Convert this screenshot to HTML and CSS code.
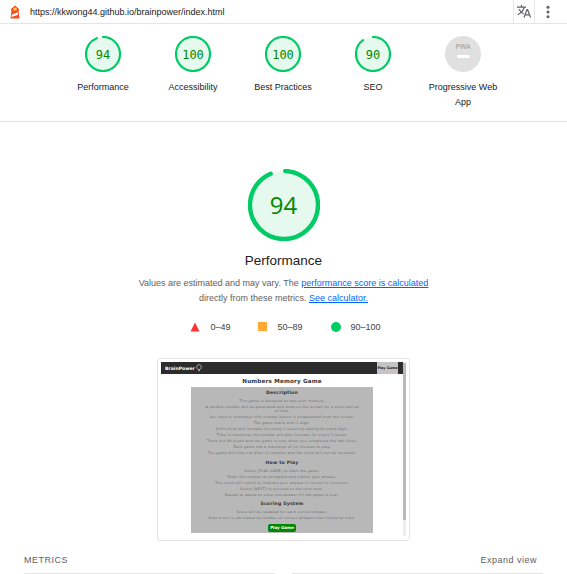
FILE: index.html
```html
<!DOCTYPE html>
<html lang="en">
<head>
<meta charset="utf-8">
<title>Lighthouse Report</title>
<link rel="stylesheet" href="styles.css">
</head>
<body>
<header class="topbar">
  <svg class="logo" width="10" height="14" viewBox="0 0 10 14"><path d="M1 4 5 0.5 9 4v2H8.500L9.500 13.500h-9L1.500 6H1z" fill="#f44b21"/><path d="M3.300 5.500V4.200a1.700 1.700 0 0 1 3.400 0v1.300z" fill="#ffd04f"/><path d="M1.800 9.700 7.800 7.200l.3 2.600L1.600 12z" fill="#fff"/></svg>
  <span class="url">https://kkwong44.github.io/brainpower/index.html</span>
  <span class="translate"><svg width="14" height="13" viewBox="0 0 14 13" fill="none" stroke="#5f6368" stroke-width="1.2"><path d="M0 2.2h9M4.5 0v2.2M7.3 2.2C6.5 5.5 4 8 .8 9.7M2 4.2c1 2 3 3.8 4.8 4.8M7 12.5l3-8h.6l3 8M8 9.8h4.6"/></svg></span>
  <svg class="kebab" width="4" height="14" viewBox="0 0 4 14" fill="#5f6368"><circle cx="2" cy="2.2" r="1.5"/><circle cx="2" cy="7" r="1.5"/><circle cx="2" cy="11.8" r="1.5"/></svg>
</header>

<nav class="scores">
  <div class="score"><svg class="ring" viewBox="0 0 36 36"><circle class="disc" cx="18" cy="18" r="17"/><circle class="arc" cx="18" cy="18" r="17" pathLength="100" stroke-dasharray="94 6"/><text x="18" y="22.6">94</text></svg><span>Performance</span></div>
  <div class="score"><svg class="ring" viewBox="0 0 36 36"><circle class="disc" cx="18" cy="18" r="17"/><circle class="arc" cx="18" cy="18" r="17"/><text x="18" y="22.6">100</text></svg><span>Accessibility</span></div>
  <div class="score"><svg class="ring" viewBox="0 0 36 36"><circle class="disc" cx="18" cy="18" r="17"/><circle class="arc" cx="18" cy="18" r="17"/><text x="18" y="22.6">100</text></svg><span>Best Practices</span></div>
  <div class="score"><svg class="ring" viewBox="0 0 36 36"><circle class="disc" cx="18" cy="18" r="17"/><circle class="arc" cx="18" cy="18" r="17" pathLength="100" stroke-dasharray="90 10"/><text x="18" y="22.6">90</text></svg><span>SEO</span></div>
  <div class="score"><svg class="ring" viewBox="0 0 36 36"><circle cx="18" cy="18" r="18" fill="#e0e0e0"/><text class="pwa" x="18" y="12.5">PWA</text><rect x="12" y="19" width="12.5" height="3" rx="1" fill="#fff"/></svg><span>Progressive Web App</span></div>
</nav>

<main>
  <section class="hero">
    <svg class="gauge" viewBox="0 0 72 72"><circle class="disc" cx="36" cy="36" r="34"/><circle class="arc big" cx="36" cy="36" r="34" pathLength="100" stroke-dasharray="93 7"/><text class="bignum" x="35.5" y="45">94</text></svg>
    <h1>Performance</h1>
    <p class="desc">Values are estimated and may vary. The <a>performance score is calculated</a></p>
    <p class="desc second">directly from these metrics. <a>See calculator.</a></p>
    <div class="legend">
      <span><svg width="10" height="10"><path d="M5 0.5 9.5 9.5h-9z" fill="#f33"/></svg>0–49</span>
      <span><i class="square"></i>50–89</span>
      <span><i class="dot"></i>90–100</span>
    </div>
  </section>

  <div class="shot">
    <div class="page">
      <div class="nav"><b>BrainPower</b><svg width="6" height="8" viewBox="0 0 6 8" fill="none" stroke="#ddd" stroke-width=".7"><path d="M2 5.5C.2 4 .3 1 3 .7s2.800 3.300 1 4.800zM2 6.800h2"/></svg><b class="play">Play Game</b></div>
      <div class="title">Numbers Memory Game</div>
      <div class="panel">
        <h2>Description</h2>
        <p>This game is designed to test your memory.</p>
        <p class="wrapped">A random number will be generated and show on the screen for a short period<br>of time.</p>
        <p>You need to remember this number before it disappeared from the screen.</p>
        <p>The game starts with 1 digit.</p>
        <p>Difficulties will increase for every 3 levels by adding an extra digit.</p>
        <p>Time to memorise the number will also increase for every 3 levels.</p>
        <p>There are 99 levels and the game is over when you completed the last level.</p>
        <p>Each game has a maximum of 10 minutes to play.</p>
        <p>The game will time out after 10 minutes and the score will not be recorded.</p>
        <h2 class="how">How to Play</h2>
        <p>Select [PLAY GAME] to start the game.</p>
        <p>Enter the number as prompted and submit your answer.</p>
        <p>The result will return to indicate your answer is correct or incorrect.</p>
        <p>Select [NEXT] to proceed to the next level.</p>
        <p>Repeat as above to enter you answer till the game is over.</p>
        <h2 class="scoring">Scoring System</h2>
        <p>Score will be updated for each correct answer.</p>
        <p>Best score is calculated by number of correct answers then follow by time.</p>
        <span class="button">Play Game</span>
      </div>
    </div>
    <div class="scroll"><i></i></div>
  </div>

  <section class="metrics">
    <div>METRICS</div>
    <div class="expand">Expand view</div>
  </section>
</main>
</body>
</html>
```

FILE: styles.css
```css
* { box-sizing: border-box; }
body { margin: 0; width: 567px; height: 574px; overflow: hidden; background: #fff; color: #333; font-family: "Liberation Sans", Arial, sans-serif; font-size: 9px; }
p, h1, h2 { margin: 0; }
svg { display: block; flex: none; }

.topbar { height: 24px; display: flex; align-items: center; padding-left: 10px; border-bottom: 1px solid #e4e4e4; }
.logo { margin-top: 1px; }
.url { margin-left: 10px; font-size: 9px; line-height: 12px; color: #212121; }
.translate { margin-left: auto; width: 22px; height: 23px; border: 1px solid #e6e6e6; border-width: 0 1px; display: flex; align-items: center; justify-content: center; }
.kebab { margin: 0 17px 0 11px; }

.scores { height: 98px; padding: 12px 0 0 58px; display: flex; border-bottom: 1px solid #e0e0e0; }
.score { width: 90px; display: flex; flex-direction: column; align-items: center; text-align: center; font-size: 9px; line-height: 15px; color: #212121; }
.score span { margin-top: 8px; width: 74px; }
.ring { width: 36px; height: 36px; }
.disc { fill: #e6f9ef; }
.arc { fill: none; stroke: #0c6; stroke-width: 2.2; stroke-linecap: round; transform: rotate(-90deg); transform-origin: 50% 50%; }
.arc.big { stroke-width: 4.4; transform: rotate(-88deg); }
text { font: 12px "DejaVu Sans Mono", monospace; fill: #080; text-anchor: middle; }
text.pwa { font: 7px Roboto, sans-serif; fill: #999; }
text.bignum { font: 24px "Open Sans", sans-serif; }

.hero { padding-top: 47px; display: flex; flex-direction: column; align-items: center; }
.gauge { width: 72px; height: 72px; }
h1 { margin-top: 10px; font-size: 13.5px; line-height: 20px; font-weight: 400; color: #212121; }
.desc { margin-top: 5px; line-height: 15px; color: #616161; }
.second { margin-top: 0; }
a { color: #06f; text-decoration: underline; }
.legend { display: flex; gap: 28px; margin: 13px 0 0 4px; height: 15px; color: #424242; }
.legend span { display: flex; align-items: center; gap: 10px; }
.square { width: 9px; height: 9px; background: #fa3; }
.dot { width: 10px; height: 10px; border-radius: 50%; background: #0c6; }

.shot { margin: 24px 0 0 157px; width: 253px; height: 183px; padding: 3px; border: 1px solid #e4e4e4; border-radius: 3px; display: flex; }
.page { width: 242px; height: 175px; font-family: "DejaVu Sans", sans-serif; }
.nav { height: 12px; padding: 0 5px 0 4px; background: #2c2c2c; color: #fff; display: flex; align-items: center; font-size: 4.6px; }
.nav svg { margin-left: 1px; }
.play { margin-left: auto; width: 21px; height: 12px; line-height: 12px; background: #c4c4c4; color: #222; font-size: 3.4px; text-align: center; white-space: nowrap; }
.title { height: 13px; line-height: 14px; text-align: center; font-size: 5.6px; font-weight: 700; letter-spacing: .2px; color: #333; }
.panel { margin-left: 30px; width: 182px; height: 146px; padding-top: 2px; background: #b8b8b8; text-align: center; white-space: nowrap; }
.panel h2 { height: 9px; line-height: 8px; font-size: 4.6px; font-weight: 700; letter-spacing: .2px; color: #333; }
.panel p { height: 6px; line-height: 6px; font-size: 3.3px; letter-spacing: .31px; color: #686868; }
.panel .wrapped { height: 10px; line-height: 4.3px; padding-top: 1px; }
.panel .how { margin-top: 3px; }
.panel .scoring { margin-top: 2px; }
.button { display: block; margin: 3px auto 0; width: 28px; height: 8px; line-height: 8px; border-radius: 2px; background: #080; color: #fff; font-size: 4px; font-weight: 700; }
.scroll { width: 3px; height: 174px; background: #eee; }
.scroll i { display: block; height: 157px; margin-top: 1px; background: #bbb; }

.metrics { margin: 9px 0 0 24px; width: 519px; display: grid; grid-template-columns: 251px 251px; gap: 17px; font-size: 9px; letter-spacing: .5px; color: #616161; }
.metrics div { height: 24px; line-height: 20px; border-bottom: 1px solid #e4e4e4; }
.expand { text-align: right; padding-right: 6px; }
```
